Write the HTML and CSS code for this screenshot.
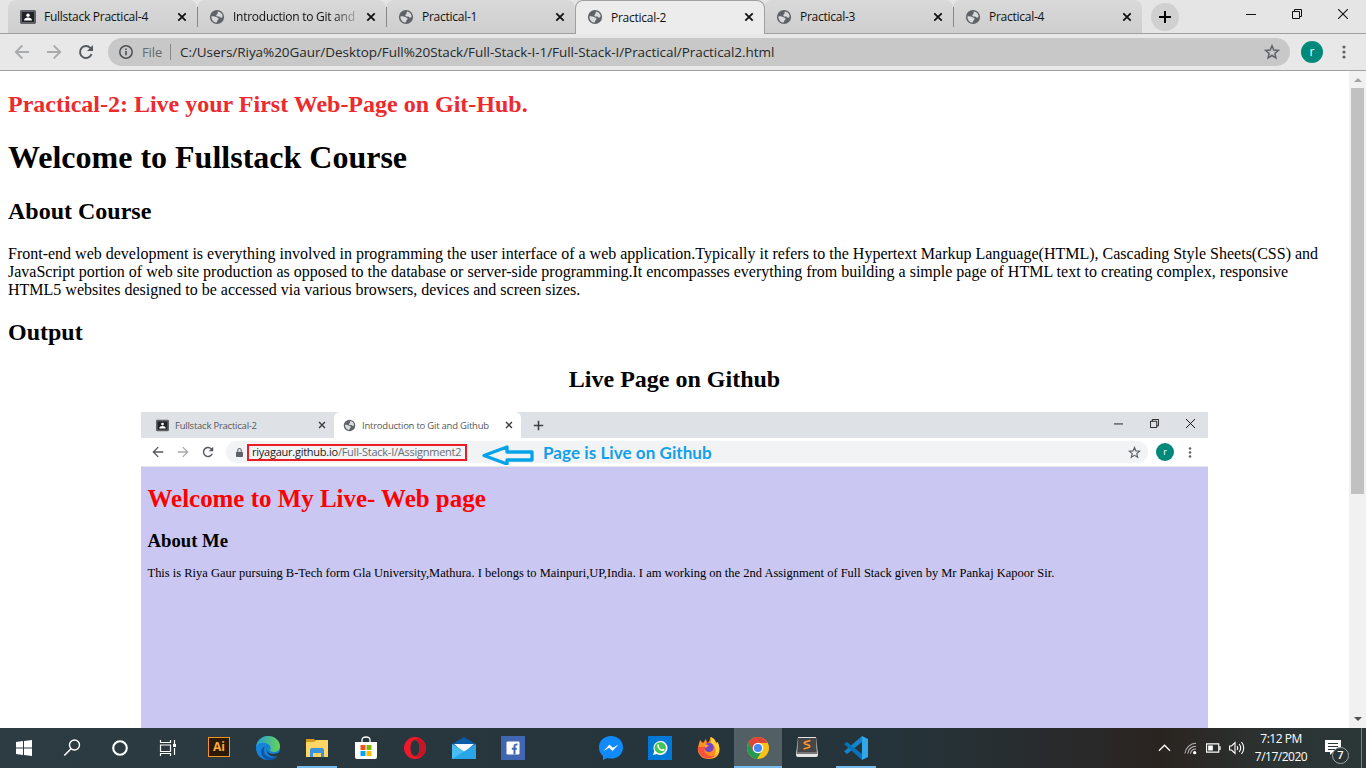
FILE: index.html
```html
<!DOCTYPE html>
<html lang="en">
<head>
<meta charset="utf-8">
<title>Practical-2</title>
<link rel="stylesheet" href="styles.css">
</head>
<body>
<svg class="defs" width="0" height="0">
  <symbol id="globe" viewBox="0 0 16 16"><circle cx="8" cy="8" r="7.100" fill="#5f6368"/><path d="M9 2.500c2.200.3 3.900 1.800 4.500 3.900.2 1.300-.5 2.300-1.300 2.300-1 0-1-1.100-2.200-1.200-1.300 0-2.600.1-2.700-1.100 0-1 1.100-.9 1.300-1.900C8.700 3.800 8.500 3.100 9 2.500z" fill="#dadada"/><path d="M2.400 7.400c1.600-.3 3.200-.4 4.500.5.900.6 2.600.5 2.700 1.800.1 1-1 1.200-1.300 2-.2.700-.2 1.400-.9 1.800C4.600 13.200 2.300 10.600 2.400 7.400z" fill="#dadada"/></symbol>
  <symbol id="board" viewBox="0 0 16 16"><rect x="0" y="1" width="16" height="14" rx="1.400" fill="#5f6368"/><rect x="2" y="3" width="12" height="10" fill="#202226"/><circle cx="8" cy="6.300" r="1.700" fill="#fff"/><path d="M4 11.600c0-2 2-3 4-3s4 1 4 3z" fill="#fff"/></symbol>
  <symbol id="x" viewBox="0 0 10 10"><path d="M1.300 1.300l7.400 7.400M8.700 1.300L1.300 8.700" stroke="currentColor" stroke-width="1.800"/></symbol>
  <symbol id="back" viewBox="0 0 16 16"><path d="M15 8H2M8.300 1.500L1.800 8l6.500 6.500" fill="none" stroke="currentColor" stroke-width="1.800"/></symbol>
  <symbol id="fwd" viewBox="0 0 16 16"><path d="M1 8h13M7.700 1.500L14.200 8l-6.500 6.500" fill="none" stroke="currentColor" stroke-width="1.800"/></symbol>
  <symbol id="reload" viewBox="0 0 16 16"><path d="M13.600 10.200A6 6 0 1 1 12.300 3.800L14 5.500" fill="none" stroke="currentColor" stroke-width="1.900"/><path d="M15 1v6H9z" fill="currentColor"/></symbol>
  <symbol id="star" viewBox="0 0 16 16"><path d="M8 1.800l1.750 4.200 4.600.4-3.500 3 1.050 4.450L8 11.500l-3.900 2.350L5.150 9.400l-3.500-3 4.600-.4z" fill="none" stroke="#5f6368" stroke-width="1.500"/></symbol>
  <symbol id="dots" viewBox="0 0 4 14"><circle cx="2" cy="2" r="1.600" fill="#5f6368"/><circle cx="2" cy="7" r="1.600" fill="#5f6368"/><circle cx="2" cy="12" r="1.600" fill="#5f6368"/></symbol>
  <symbol id="plus" viewBox="0 0 14 14"><path d="M7 1v12M1 7h12" stroke="currentColor" stroke-width="2"/></symbol>
  <symbol id="min" viewBox="0 0 10 10"><path d="M0 5.500h10" stroke="#111"/></symbol>
  <symbol id="restore" viewBox="0 0 10 10"><path d="M.5 2.500h7v7h-7zM2.500 2.500v-2h7v7h-2" fill="none" stroke="#111"/></symbol>
  <symbol id="close" viewBox="0 0 10 10"><path d="M0 0l10 10M10 0L0 10" stroke="#111" stroke-width="1.100"/></symbol>
</svg>

<header class="tabstrip">
  <div class="tab"><svg class="fav"><use href="#board"/></svg><span class="title">Fullstack Practical-4</span><svg class="tabx"><use href="#x"/></svg></div>
  <div class="tab sep"><svg class="fav"><use href="#globe"/></svg><span class="title fade">Introduction to Git and</span><svg class="tabx"><use href="#x"/></svg></div>
  <div class="tab sep"><svg class="fav"><use href="#globe"/></svg><span class="title">Practical-1</span><svg class="tabx"><use href="#x"/></svg></div>
  <div class="tab active"><svg class="fav"><use href="#globe"/></svg><span class="title">Practical-2</span><svg class="tabx"><use href="#x"/></svg></div>
  <div class="tab"><svg class="fav"><use href="#globe"/></svg><span class="title">Practical-3</span><svg class="tabx"><use href="#x"/></svg></div>
  <div class="tab sep last"><svg class="fav"><use href="#globe"/></svg><span class="title">Practical-4</span><svg class="tabx"><use href="#x"/></svg></div>
  <span class="newtab"><svg width="14" height="14"><use href="#plus"/></svg></span>
  <div class="winbtns"><svg><use href="#min"/></svg><svg><use href="#restore"/></svg><svg><use href="#close"/></svg></div>
</header>

<div class="toolbar">
  <div class="nav"><svg class="dim"><use href="#back"/></svg><svg class="dim"><use href="#fwd"/></svg><svg><use href="#reload"/></svg></div>
  <div class="omnibox">
    <svg class="info" viewBox="0 0 14 14"><circle cx="7" cy="7" r="6.200" fill="none" stroke="#4d5054" stroke-width="1.500"/><path d="M7 6v4.300M7 3.400v1.700" stroke="#4d5054" stroke-width="1.600"/></svg>
    <span class="scheme">File</span><i class="bar"></i>
    <span class="url">C:/Users/Riya%20Gaur/Desktop/Full%20Stack/Full-Stack-I-1/Full-Stack-I/Practical/Practical2.html</span>
    <svg class="bookmark"><use href="#star"/></svg>
  </div>
  <span class="avatar">r</span>
  <svg class="menu"><use href="#dots"/></svg>
</div>

<div class="viewport">
  <main class="page">
    <h2 class="red">Practical-2: Live your First Web-Page on Git-Hub.</h2>
    <h1>Welcome to Fullstack Course</h1>
    <h2>About Course</h2>
    <p>Front-end web development is everything involved in programming the user interface of a web application.Typically it refers to the Hypertext Markup Language(HTML), Cascading Style Sheets(CSS) and<br>JavaScript portion of web site production as opposed to the database or server-side programming.It encompasses everything from building a simple page of HTML text to creating complex, responsive<br>HTML5 websites designed to be accessed via various browsers, devices and screen sizes.</p>
    <h2>Output</h2>
    <h2 class="center">Live Page on Github</h2>
    <section class="shot">
      <div class="s-tabs">
        <div class="s-tab first"><svg class="s-fav"><use href="#board"/></svg><span class="s-title">Fullstack Practical-2</span><svg class="s-x"><use href="#x"/></svg></div>
        <div class="s-tab on"><svg class="s-fav"><use href="#globe"/></svg><span class="s-title">Introduction to Git and Github</span><svg class="s-x"><use href="#x"/></svg></div>
        <svg class="s-plus"><use href="#plus"/></svg>
        <div class="s-win"><svg><use href="#min"/></svg><svg><use href="#restore"/></svg><svg><use href="#close"/></svg></div>
      </div>
      <div class="s-bar">
        <div class="s-nav"><svg><use href="#back"/></svg><svg class="dim"><use href="#fwd"/></svg><svg><use href="#reload"/></svg></div>
        <div class="s-omni">
          <svg class="lock" viewBox="0 0 8 10"><rect x="0" y="4" width="8" height="6" rx=".8" fill="#5f6368"/><path d="M2 4V2.500a2 2 0 0 1 4 0V4" fill="none" stroke="#5f6368" stroke-width="1.200"/></svg>
          <span class="s-url"><b>riyagaur.github.io</b>/Full-Stack-I/Assignment2</span>
          <svg class="arrow" viewBox="0 0 52 20"><path d="M2 10.500L25 2v5h25v8H25v4z" fill="none" stroke="#06a3ea" stroke-width="3.300" stroke-linejoin="round"/></svg>
          <span class="note">Page is Live on Github</span>
          <svg class="s-star"><use href="#star"/></svg>
        </div>
        <span class="s-avatar">r</span>
        <svg class="s-menu"><use href="#dots"/></svg>
      </div>
      <div class="s-body">
        <div class="s-h1">Welcome to My Live- Web page</div>
        <div class="s-h2">About Me</div>
        <div class="s-p">This is Riya Gaur pursuing B-Tech form Gla University,Mathura. I belongs to Mainpuri,UP,India. I am working on the 2nd Assignment of Full Stack given by Mr Pankaj Kapoor Sir.</div>
      </div>
    </section>
  </main>
  <aside class="scroll">
    <svg width="17" height="17"><path d="M5 11l4-4 4 4z" fill="#a3a3a3"/></svg>
    <i class="thumb"></i>
    <svg class="down" width="17" height="17"><path d="M5 6h8l-4 4z" fill="#505050"/></svg>
  </aside>
</div>

<footer class="taskbar">
  <div class="sys">
    <svg viewBox="0 0 24 24"><path d="M4 6l7-1v6.500H4zM12 4.900L20 4v7.500h-8zM4 12.500h7V19l-7-1zM12 12.500h8V20l-8-.9z" fill="#fff"/></svg>
    <svg viewBox="0 0 24 24"><circle cx="14.500" cy="9" r="5" fill="none" stroke="#fff" stroke-width="1.400"/><path d="M11 12.700L4.300 19.500" stroke="#fff" stroke-width="1.500"/></svg>
    <svg viewBox="0 0 24 24"><circle cx="12" cy="12" r="6.800" fill="none" stroke="#fff" stroke-width="2.100"/></svg>
    <svg viewBox="0 0 24 24"><path d="M4.500 4v2.500h10V4M4.500 9h10v6.500h-10zM4.500 20v-2.500h10V20M18.500 4v4M18.500 12v7" fill="none" stroke="#fff" stroke-width="1.200"/><path d="M17 8h3v3h-3z" fill="#fff"/></svg>
  </div>
  <div class="apps">
    <div class="app"><span class="ai">Ai</span></div>
    <div class="app"><svg viewBox="0 0 24 24"><defs><linearGradient id="eg"><stop stop-color="#249fda"/><stop offset="1" stop-color="#66d454"/></linearGradient></defs><circle cx="12" cy="12" r="12" fill="#1683d8"/><path d="M0 11C1 4 6 0 12 0c7 0 12 5 12 10 0 4-3 6-6 6-3 0-4-1-4-2 1-1 1-5-3-6.500C7 6 2 7 0 11z" fill="url(#eg)"/><path d="M9 10c-3 5 0 12 8 11.500 2 0 4-1 5-2-2 4-7 5-10 4.500C5 22 2 14 9 10z" fill="#0c57a6"/><path d="M12 9.500c-3 3-1 8.500 5 8.500 3 0 5-1 7.500-2.500-.5 2-1.500 3.500-3 4.500C13 22.500 8 15.500 12 9.500z" fill="#27383e"/></svg></div>
    <div class="app run"><svg viewBox="0 0 24 24"><path d="M1 3h8l2 2v4H1z" fill="#d79a18"/><path d="M1 6h8l2-2h12v17H1z" fill="#ffd666"/><path d="M5 21v-7q0-2 2-2h10q2 0 2 2v7h-3v-4H8v4z" fill="#3b94db"/></svg></div>
    <div class="app"><svg viewBox="0 0 24 24"><path d="M8 6V4q0-3 4-3t4 3v2" fill="none" stroke="#fff" stroke-width="1.300"/><path d="M1 6h22v15q0 2-2 2H3q-2 0-2-2z" fill="#fff"/><path d="M6.500 9h5v5h-5z" fill="#f25022"/><path d="M12.500 9h5v5h-5z" fill="#7fba00"/><path d="M6.500 15h5v5h-5z" fill="#00a4ef"/><path d="M12.500 15h5v5h-5z" fill="#ffb900"/></svg></div>
    <div class="app"><svg viewBox="0 0 24 24"><path d="M12 1a11 11 0 1 0 0 22 11 11 0 1 0 0-22zm0 3c3 0 4.500 4 4.500 8S15 20 12 20s-4.500-4-4.500-8S9 4 12 4z" fill="#f0182a" fill-rule="evenodd"/><path d="M12 4q4-3 7-.3a11 11 0 0 1 0 16.600Q15 22 12 20c3 0 4.500-4 4.500-8S15 4 12 4z" fill="#c4162a"/></svg></div>
    <div class="app"><svg viewBox="0 0 24 24"><path d="M0 8L12 1l12 7v3H0z" fill="#0a5da8"/><path d="M2 8h20l-10 9z" fill="#f5f7fa"/><path d="M0 8l12 7.500L24 8v15H0z" fill="#29a5ea"/><path d="M0 23l12-7.500L0 8z" fill="#48bcf3"/></svg></div>
    <div class="app"><svg viewBox="0 0 24 24"><path d="M0 0h24v24H0z" fill="#4267b2"/><rect x="5.500" y="5.500" width="13" height="13" rx="1.200" fill="#fff"/><path d="M13.500 18.500v-5M13.500 14V10.300q0-2.200 3-1.800M10.800 12.800h5" fill="none" stroke="#4267b2" stroke-width="2"/></svg></div>
    <div class="app"></div>
    <div class="app"><svg viewBox="0 0 24 24"><path d="M12 0C5 0 0 5 0 11.200 0 15 1.500 18 4 20v4l4-2c9 2.500 16-3 16-10.800C24 5 19 0 12 0z" fill="#118bfb"/><path d="M4.500 15l6-6.500 3.300 3.300L19.500 8.500l-6 6.500-3.300-3.300z" fill="#fff"/></svg></div>
    <div class="app"><svg viewBox="0 0 24 24"><path d="M0 0h24v24H0z" fill="#0078d7"/><path d="M5 19l1.200-4A7 7 0 1 1 9 18z" fill="#fff"/><circle cx="12.200" cy="11.700" r="5.700" fill="#43c554"/><path d="M9.500 8.500q1-1 1.500 1t0 1.500q1 2 3 2.500 1-1.200 1.500-.7 2 .8.500 2c-3 1.500-8-3-6.500-6.300z" fill="#fff"/></svg></div>
    <div class="app"><svg viewBox="0 0 24 24"><path d="M3 4l3 3 3-4 1 4c2-1 3-2 3-6 4 2 5 4 5 6l2-1c5 7 3 17-8 17C3 23 0 16 1 11z" fill="#ff8b21"/><path d="M14 1c4 2 5 4 5 7l1.500-2c4 7 1 15-6 16.500C21 17 19 9 14 7z" fill="#ffd43c"/><circle cx="12" cy="11.500" r="4.700" fill="#7546c8"/><path d="M1 11c0 14 17 14 21 4-3 9-18 5-14-4z" fill="#f9503f"/><path d="M6 9q3-2 6 1-2 0-3 2z" fill="#ffa52b"/></svg></div>
    <div class="app run current"><svg viewBox="0 0 24 24"><circle cx="12" cy="12" r="11" fill="#fbc116"/><path d="M12 12L2.500 6.500A11 11 0 0 0 11 23l5.500-9z" fill="#229b50"/><path d="M2.500 6.500A11 11 0 0 1 21.700 7H12L7 15z" fill="#df4437"/><circle cx="12" cy="12" r="5.300" fill="#fff"/><circle cx="12" cy="12" r="4.100" fill="#4688f1"/></svg></div>
    <div class="app"><svg viewBox="0 0 24 24"><path d="M3 1h18l2 18q0 2-2 2H3q-2 0-2-2z" fill="#e5e5e5"/><path d="M3 2h18l.8 14H2.200z" fill="#464646"/><path d="M2 16h20v2H2z" fill="#777"/><path d="M15.500 4.500l-5 1.300q-2.500 1.400 0 2.300l3 .9q2.500 1.500 0 2.500l-5 1.500" fill="none" stroke="#f69331" stroke-width="1.800"/></svg></div>
    <div class="app run"><svg viewBox="0 0 24 24"><path d="M18 0v6L3 18l-3-2.500z" fill="#1684ca"/><path d="M0 8l3-2 15 12v6z" fill="#0873b9"/><path d="M18 0l6 3v18l-6 3z" fill="#32a7ec"/></svg></div>
  </div>
  <div class="tray">
    <svg class="chev" viewBox="0 0 14 8"><path d="M1 7l6-6 6 6" fill="none" stroke="#fff" stroke-width="1.300"/></svg>
    <svg class="wifi" viewBox="0 0 14 14"><path d="M1 13A12 12 0 0 1 13 2M4 13a9 9 0 0 1 9-8M7 13a6 6 0 0 1 6-5" fill="none" stroke="#bbb" stroke-width="1.100"/><circle cx="11.500" cy="12" r="1.800" fill="#fff"/></svg>
    <svg class="batt" viewBox="0 0 16 10"><path d="M.6.600h13v8.800H.6zM15 3v4" fill="none" stroke="#fff" stroke-width="1.200"/><path d="M2.300 2.300h5v5.400h-5z" fill="#fff"/></svg>
    <svg class="vol" viewBox="0 0 16 14"><path d="M.6 5h2L6 1.500v11L2.600 9h-2z" fill="none" stroke="#fff" stroke-width="1.100"/><path d="M8 5q1.500 2 0 4M10.200 3q3 4 0 8M12.500 1q4.500 6 0 12" fill="none" stroke="#fff" stroke-width="1.100"/></svg>
    <div class="clock"><span>7:12 PM</span><span>7/17/2020</span></div>
    <div class="notif"><svg viewBox="0 0 16 16"><path d="M0 0h16v12H8l-3 3v-3H0z" fill="#fff"/><path d="M3 3.500h10M3 6.500h10M3 9.500h10" stroke="#2b3435"/></svg><span class="badge">7</span></div>
    <i class="peek"></i>
  </div>
</footer>
</body>
</html>
```
FILE: styles.css
```css
* { box-sizing: border-box; }
body { margin: 0; width: 1366px; height: 768px; overflow: hidden; display: flex; flex-direction: column; background: #fff; font-family: "Open Sans", "Noto Sans", sans-serif; }
svg { display: block; flex: none; }
.defs { position: absolute; }

/* Tab strip */
.tabstrip { height: 34px; flex: none; display: flex; padding-left: 8px; background: #e5e5e5; border-bottom: 1px solid #a0a0a0; }
.tab { position: relative; width: 189px; height: 33px; display: flex; align-items: center; padding: 0 10px 0 12px; background: linear-gradient(#d9d9d9, #cecece); border-radius: 8px 8px 0 0; }
.tab.sep::before { content: ""; position: absolute; left: 0; top: 7px; width: 1px; height: 20px; background: #85888b; }
.tab.active { height: 34px; background: #ececec; border: 1px solid #a0a0a0; border-bottom: 0; width: 190px; margin-right: -1px; padding: 0 10px 1px 11px; z-index: 1; }
.fav { width: 16px; height: 16px; margin-right: 8px; }
.title { flex: 1; white-space: nowrap; font-size: 12px; letter-spacing: -.26px; color: #111; }
.title.fade { -webkit-mask-image: linear-gradient(90deg, #000 100px, rgba(0,0,0,.25) 122px); mask-image: linear-gradient(90deg, #000 100px, rgba(0,0,0,.25) 122px); }
.tabx { width: 10px; height: 10px; color: #111; }
.newtab { width: 28px; height: 28px; margin: 3px 0 0 9px; border-radius: 50%; background: #d0d0d0; display: flex; align-items: center; justify-content: center; color: #000; }
.winbtns { margin: 9px 18px 0 auto; display: flex; gap: 36px; }
.winbtns svg { width: 10px; height: 10px; }

/* Toolbar */
.toolbar { height: 37px; flex: none; display: flex; align-items: center; background: #e8e8e8; border-bottom: 1px solid #a0a0a0; }
.nav { display: flex; gap: 16px; width: 108px; padding-left: 14px; color: #55595e; }
.nav svg { width: 16px; height: 16px; }
.dim { color: #a9aaac; }
.omnibox { width: 1182px; height: 28px; border-radius: 14px; background: #c8c8c8; display: flex; align-items: center; padding: 0 10px 0 11px; font-size: 14px; white-space: nowrap; }
.info { width: 14px; height: 14px; }
.scheme { width: 28px; margin-left: 9px; color: #66696d; font-size: 13px; letter-spacing: -.1px; }
.bar { width: 1px; height: 16px; background: #85888b; }
.url { margin-left: 9px; color: #26282b; font-size: 13.500px; letter-spacing: -.055px; }
.bookmark { width: 16px; height: 16px; margin-left: auto; }
.avatar { width: 22px; height: 22px; margin-left: 11px; border-radius: 50%; background: #00897b; color: #fff; font-size: 12px; line-height: 21px; text-align: center; }
.menu { width: 4px; height: 14px; margin-left: 19px; }

/* Page */
.viewport { height: 657px; flex: none; display: flex; overflow: hidden; }
.page { width: 1349px; padding: 0 8px; font-family: "Liberation Serif", "Times New Roman", serif; color: #000; overflow: hidden; }
h1, h2, p { white-space: nowrap; }
h1 { font-size: 32px; line-height: 37px; margin: 21.440px 0; }
h2 { font-size: 24px; line-height: 27px; margin: 19.920px 0; }
.red { color: #ed2a2d; }
.center { text-align: center; }
.page p { font-size: 16px; line-height: 18px; margin: 0; }
.scroll { width: 17px; background: #f1f1f1; display: flex; flex-direction: column; }
.thumb { width: 13px; height: 406px; margin-left: 2px; background: #c1c1c1; }
.down { margin-top: auto; }

/* Embedded browser capture */
.shot { width: 1067px; margin: 0 auto; font-family: "Open Sans", "Noto Sans", sans-serif; }
.s-tabs { height: 26px; background: #dee1e6; display: flex; }
.s-tab { display: flex; align-items: center; height: 26px; }
.s-tab.first { width: 193px; padding: 0 8px 0 15px; }
.s-tab.on { width: 187px; padding: 0 8px 0 9px; background: #fff; border-radius: 6px 6px 0 0; }
.s-fav { width: 13px; height: 13px; margin-right: 6px; }
.s-title { flex: 1; font-size: 9.500px; letter-spacing: -.23px; color: #55585c; white-space: nowrap; }
.s-x { width: 8px; height: 8px; color: #3c4043; }
.s-plus { width: 11px; height: 11px; margin: 8px 0 0 12px; color: #3c4043; }
.s-win { display: flex; gap: 27px; margin: 7px 13px 0 auto; }
.s-win svg { width: 9px; height: 9px; }
.s-bar { height: 29px; background: #fff; border-bottom: 1px solid #e4e5ea; display: flex; align-items: center; }
.s-nav { width: 85px; display: flex; gap: 13px; padding-left: 11px; color: #55585d; }
.s-nav svg { width: 12px; height: 12px; }
.s-omni { width: 922px; height: 22px; background: #f1f3f4; border-radius: 11px; display: flex; align-items: center; padding: 0 7px 0 10px; white-space: nowrap; }
.lock { width: 7px; height: 9px; margin-right: 4px; }
.s-url { width: 220px; height: 17px; border: 2px solid #ec1c24; padding-left: 3px; font-size: 11px; line-height: 12px; letter-spacing: -.245px; color: #6b6e72; }
.s-url b { font-weight: 400; color: #222; }
.arrow { width: 52px; height: 20px; margin: 5px 0 0 15px; }
.note { margin-left: 9px; font-family: Lato, "Open Sans", sans-serif; font-weight: 700; font-size: 17px; letter-spacing: .07px; color: #12a0ea; }
.s-star { width: 13px; height: 13px; margin-left: auto; }
.s-avatar { width: 18px; height: 18px; margin-left: 8px; border-radius: 50%; background: #00897b; color: #fff; font-size: 9px; line-height: 17px; text-align: center; }
.s-menu { width: 4px; height: 11px; margin-left: 14px; }
.s-body { height: 270px; background: #cac8f2; padding: 17px 0 0 6.500px; font-family: "Liberation Serif", serif; white-space: nowrap; }
.s-h1 { color: #f00; font-weight: 700; font-size: 24.950px; line-height: 30px; }
.s-h2 { font-weight: 700; font-size: 18.700px; line-height: 22px; margin-top: 16px; }
.s-p { font-size: 12.490px; line-height: 15px; margin-top: 14px; }

/* Taskbar */
.taskbar { height: 40px; flex: none; display: flex; background: linear-gradient(90deg, #2c3c42, #27363c 500px, #25343a 900px, #29292a 1080px, #2a2420 1160px, #2c3433 1280px, #2b3738); }
.sys, .apps { display: flex; }
.sys svg { width: 24px; height: 24px; margin: 8px 12px; }
.apps { margin-left: 3px; }
.app { position: relative; width: 49px; height: 40px; padding: 8px 0 0 12px; }
.app svg { position: relative; width: 24px; height: 24px; }
.app.run::after { content: ""; position: absolute; left: 4px; bottom: 0; width: 40px; height: 2px; background: #76b9ed; }
.app.current::before { content: ""; position: absolute; inset: 0 1px 0 0; background: #526065; }
.app.current::after { left: 0; width: 48px; }
.ai { display: block; width: 22px; height: 20px; margin-left: 1px; margin-top: 1px; border: 1.500px solid #f7941d; background: #2b1a08; color: #ffa83c; font-weight: 700; font-size: 12px; line-height: 17px; text-align: center; }
.tray { margin-left: auto; display: flex; align-items: center; color: #fff; }
.chev { width: 13px; height: 8px; margin-right: 13px; }
.wifi { width: 13px; height: 14px; margin-right: 9px; }
.batt { width: 15px; height: 10px; margin-right: 8px; }
.vol { width: 16px; height: 14px; margin-right: 10px; }
.clock { width: 52px; display: flex; flex-direction: column; align-items: center; font-size: 12px; line-height: 18px; letter-spacing: -.5px; white-space: nowrap; }
.notif { position: relative; width: 36px; margin-left: 18px; height: 16px; }
.notif svg { width: 16px; height: 16px; }
.badge { position: absolute; left: 7px; top: 7px; width: 17px; height: 17px; border: 1px solid #a0a5a6; border-radius: 50%; background: #2b3435; font-size: 11px; font-weight: 600; line-height: 14px; text-align: center; }
.peek { width: 1px; height: 40px; margin-right: 4px; background: #777f80; }
```
